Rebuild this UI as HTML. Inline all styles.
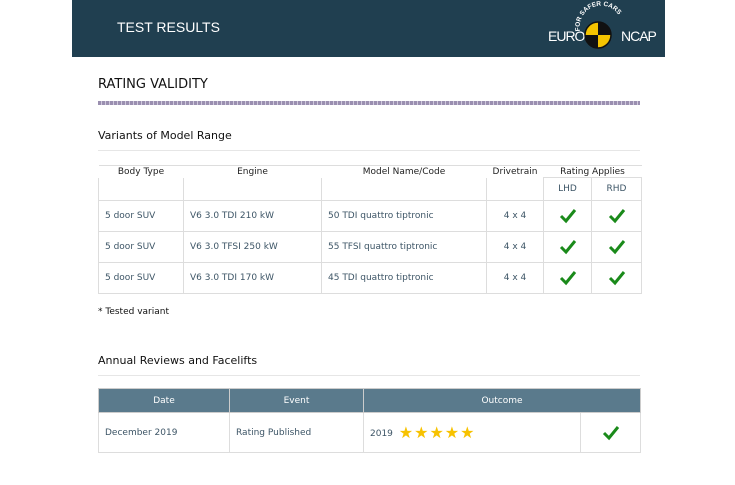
<!DOCTYPE html><html><head><style>
body{margin:0;width:735px;height:485px;background:#fff;font-family:"DejaVu Sans","Liberation Sans",sans-serif;position:relative;overflow:hidden}
.a{position:absolute}
.hdr{left:72px;top:0;width:593px;height:57px;background:#203f50}
table{border-collapse:collapse;position:absolute;font-size:9px;table-layout:fixed}
td{border:1px solid #ddd;padding:0;text-align:center;color:#3d5566;overflow:hidden;white-space:nowrap}
th{font-weight:normal;color:#222;border-top:1px solid #ddd;padding:0}
.l{text-align:left;padding-left:6px}
.ck svg{display:block;margin:0 auto}
</style></head><body>
<div class="a hdr"></div>
<div class="a" style="left:117px;top:19px;color:#fff;font-size:14px;font-family:'Liberation Sans',sans-serif">TEST RESULTS</div>
<div class="a" style="left:548px;top:28px;color:#fff;font-size:14px;letter-spacing:-1px;font-family:'Liberation Sans',sans-serif">EURO</div>
<div class="a" style="left:621px;top:28px;color:#fff;font-size:14px;letter-spacing:-1px;font-family:'Liberation Sans',sans-serif">NCAP</div>
<svg class="a" style="left:572px;top:1px" width="64" height="52" viewBox="0 0 64 52">
<circle cx="26" cy="34" r="13" fill="#f5c400" stroke="#111" stroke-width="1.5"/>
<path d="M26 21A13 13 0 0 1 39 34H26Z M26 34V47A13 13 0 0 1 13 34Z" fill="#111"/>
<path id="arc" d="M8 30A20 20 0 0 1 50 22" fill="none"/>
<text font-size="6.5" fill="#fff" font-family="Liberation Sans" font-weight="bold"><textPath href="#arc">FOR SAFER CARS</textPath></text>
</svg>
<div class="a" style="left:98px;top:77px;font-size:13px;color:#111">RATING VALIDITY</div>
<div class="a" style="left:98px;top:101px;width:542px;height:4px;background:repeating-linear-gradient(90deg,#9a8fb0 0 3px,#cfc8dc 3px 4px)"></div>
<div class="a" style="left:98px;top:129px;font-size:11px;color:#111">Variants of Model Range</div>
<div class="a" style="left:98px;top:150px;width:542px;height:1px;background:#e6e6e6"></div>
<table style="left:98px;top:165px;width:543px">
<colgroup><col style="width:85px"><col style="width:138px"><col style="width:165px"><col style="width:57px"><col style="width:48px"><col style="width:50px"></colgroup>
<tr style="height:12px"><th>Body Type</th><th>Engine</th><th>Model Name/Code</th><th>Drivetrain</th><th colspan="2">Rating Applies</th></tr>
<tr style="height:23px"><td style="border-top:0"></td><td style="border-top:0"></td><td style="border-top:0"></td><td style="border-top:0"></td><td>LHD</td><td>RHD</td></tr>
<tr style="height:31px"><td class="l">5 door SUV</td><td class="l">V6 3.0 TDI 210 kW</td><td class="l">50 TDI quattro tiptronic</td><td>4 x 4</td><td class="ck"><svg width="18" height="16"><path d="M2 8L7 13L16 2" stroke="#1a8a1a" stroke-width="3" fill="none"/></svg></td><td class="ck"><svg width="18" height="16"><path d="M2 8L7 13L16 2" stroke="#1a8a1a" stroke-width="3" fill="none"/></svg></td></tr>
<tr style="height:31px"><td class="l">5 door SUV</td><td class="l">V6 3.0 TFSI 250 kW</td><td class="l">55 TFSI quattro tiptronic</td><td>4 x 4</td><td class="ck"><svg width="18" height="16"><path d="M2 8L7 13L16 2" stroke="#1a8a1a" stroke-width="3" fill="none"/></svg></td><td class="ck"><svg width="18" height="16"><path d="M2 8L7 13L16 2" stroke="#1a8a1a" stroke-width="3" fill="none"/></svg></td></tr>
<tr style="height:31px"><td class="l">5 door SUV</td><td class="l">V6 3.0 TDI 170 kW</td><td class="l">45 TDI quattro tiptronic</td><td>4 x 4</td><td class="ck"><svg width="18" height="16"><path d="M2 8L7 13L16 2" stroke="#1a8a1a" stroke-width="3" fill="none"/></svg></td><td class="ck"><svg width="18" height="16"><path d="M2 8L7 13L16 2" stroke="#1a8a1a" stroke-width="3" fill="none"/></svg></td></tr>
</table>
<div class="a" style="left:98px;top:307px;font-size:9px;color:#111">* Tested variant</div>
<div class="a" style="left:98px;top:354px;font-size:11px;color:#111">Annual Reviews and Facelifts</div>
<div class="a" style="left:98px;top:375px;width:542px;height:1px;background:#e6e6e6"></div>
<table style="left:98px;top:388px;width:542px">
<colgroup><col style="width:131px"><col style="width:134px"><col style="width:217px"><col style="width:60px"></colgroup>
<tr style="height:24px;background:#5a7a8c"><td style="color:#fff;border-color:#ccc">Date</td><td style="color:#fff;border-color:#ccc">Event</td><td colspan="2" style="color:#fff;border-color:#ccc">Outcome</td></tr>
<tr style="height:40px"><td class="l">December 2019</td><td class="l">Rating Published</td><td class="l">2019 <span style="color:#f7c200;font-size:16px;letter-spacing:1px;margin-left:3px;vertical-align:-2px">★★★★★</span></td><td class="ck"><svg width="18" height="16"><path d="M2 8L7 13L16 2" stroke="#1a8a1a" stroke-width="3" fill="none"/></svg></td></tr>
</table>
</body></html>
